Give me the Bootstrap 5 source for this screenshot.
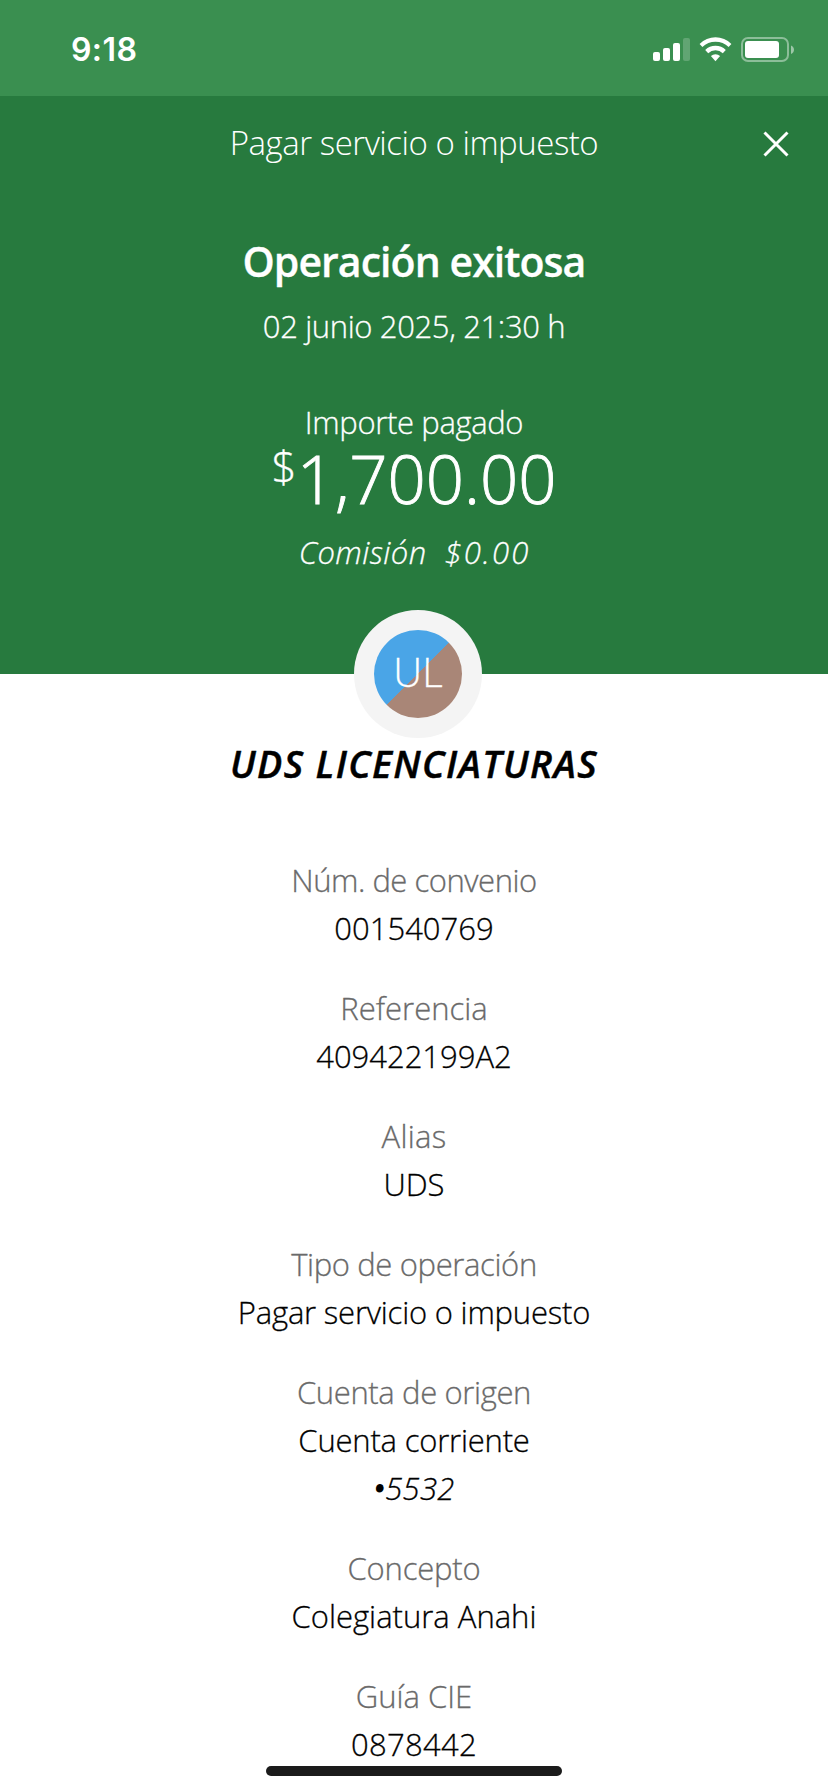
<!DOCTYPE html>
<html lang="es">
<head>
<meta charset="utf-8">
<meta name="viewport" content="width=device-width, initial-scale=1">
<title>Operación exitosa</title>
<link href="https://cdn.jsdelivr.net/npm/bootstrap@5.3.0/dist/css/bootstrap.min.css" rel="stylesheet">
<style>
  body { font-family: "Open Sans", sans-serif; font-size: 31px; line-height: 48px; font-weight: 300; color: #000; background: #fff; -webkit-text-stroke: .3px; }
  .screen { height: 1792px; }
  .status-bar { height: 96px; background: #3a8f50; padding: 0 34px 0 71px; }
  .clock { font: 600 32px/40px Inter, sans-serif; letter-spacing: .4px; margin-top: 30px; -webkit-text-stroke: 0; }
  .status-icons { margin-top: 34px; }
  .hero { height: 578px; background: #277a3e; padding-top: 23px; }
  .screen-title { font-size: 33px; letter-spacing: -.48px; -webkit-text-stroke: 0; }
  .close-btn { top: 36px; right: 40px; line-height: 0; }
  .headline { font-size: 41px; line-height: 56px; font-weight: 600; letter-spacing: -.95px; margin: 66px 0 13px; }
  .amount { font-size: 67px; line-height: 64px; margin-bottom: 18px; -webkit-text-stroke: .9px; }
  .currency { font-size: 44px; line-height: 40px; -webkit-text-stroke: .3px; }
  .fee { gap: 18px; padding-left: 1px; }
  .fee-label { letter-spacing: .42px; }
  .fee-value { letter-spacing: 2.1px; }
  .avatar-ring { width: 128px; height: 128px; background: #f4f4f4; margin: -64px 0 0 8px; }
  .avatar-disc { width: 88px; height: 88px; font-size: 40px; line-height: 84px; background: linear-gradient(135deg, #4aa5e7 50%, #a98677 50%); }
  .payee { font-size: 37.5px; line-height: 48px; font-weight: 600; letter-spacing: 1.4px; margin: 2px 0 68px; -webkit-text-stroke: .5px; }
  .details { gap: 32px; }
  .details dt { font-weight: 300; color: #6a6a6a; }
  .tight-1 { letter-spacing: -.2px; }
  .tight-2 { letter-spacing: -.36px; }
  .tight-3 { letter-spacing: -.47px; }
  .loose { letter-spacing: .3px; }
  .mask-dot { -webkit-text-stroke: 3px; }
  .home-bar { left: 266px; bottom: 16px; width: 296px; height: 10px; background: #1b1b1b; }
</style>
</head>
<body>
<div class="screen position-relative overflow-hidden">
  <header>
    <div class="status-bar d-flex justify-content-between align-items-start text-white">
      <div class="clock">9:18</div>
      <div class="status-icons d-flex">
        <svg width="142" height="32" viewBox="652 34 142 32" fill="#fff">
          <rect x="653" y="52" width="7" height="9" rx="2"/>
          <rect x="663" y="48" width="7" height="13" rx="2"/>
          <rect x="673" y="43" width="7" height="18" rx="2"/>
          <rect x="683" y="38" width="7" height="23" rx="2" opacity=".2"/>
          <path d="M699.6 43.9a22.6 22.6 0 0 1 31.8 0l-2.8 3.2a18.6 18.6 0 0 0-26.2 0z"/>
          <path d="M705.2 50a14.7 14.7 0 0 1 20.6 0l-3 3.2a10.3 10.3 0 0 0-14.6 0z"/>
          <path d="M710.9 56.1a6.8 6.8 0 0 1 9.2 0l-4.6 5.1z"/>
          <rect x="742" y="38" width="46" height="23" rx="6" fill="none" stroke="#fff" stroke-width="2" opacity=".42"/>
          <rect x="745" y="41" width="34" height="17" rx="3"/>
          <path d="M791 45.5c4 1.5 4 7 0 8.5z" opacity=".5"/>
        </svg>
      </div>
    </div>
    <div class="hero position-relative text-center text-white">
      <div class="screen-title">Pagar servicio o impuesto</div>
      <button type="button" class="close-btn btn p-0 border-0 position-absolute" aria-label="Cerrar">
        <svg width="24" height="24" viewBox="0 0 24 24" fill="none" stroke="#fff" stroke-width="3" overflow="visible"><path d="M.5.5l23 23M23.5.5l-23 23"/></svg>
      </button>
      <h1 class="headline">Operación exitosa</h1>
      <div class="tight-2 mb-5">02 junio 2025, 21:30 h</div>
      <div class="tight-2">Importe pagado</div>
      <div class="amount d-flex justify-content-center align-items-start"><span class="currency">$</span><span>1,700.00</span></div>
      <div class="fee d-flex justify-content-center fst-italic"><span class="fee-label">Comisión</span><span class="fee-value">$0.00</span></div>
    </div>
  </header>
  <main class="d-flex flex-column align-items-center text-center">
    <div class="avatar-ring rounded-circle position-relative d-flex align-items-center justify-content-center">
      <div class="avatar-disc rounded-circle text-white">UL</div>
    </div>
    <h2 class="payee fst-italic">UDS LICENCIATURAS</h2>
    <dl class="details d-flex flex-column m-0">
      <div><dt class="tight-3">Núm. de convenio</dt><dd class="m-0">001540769</dd></div>
      <div><dt>Referencia</dt><dd class="m-0">409422199A2</dd></div>
      <div><dt class="loose">Alias</dt><dd class="m-0">UDS</dd></div>
      <div><dt class="tight-2">Tipo de operación</dt><dd class="tight-1 m-0">Pagar servicio o impuesto</dd></div>
      <div><dt class="tight-2">Cuenta de origen</dt><dd class="tight-1 m-0">Cuenta corriente</dd><dd class="loose fst-italic m-0"><span class="mask-dot">•</span>5532</dd></div>
      <div><dt class="tight-1">Concepto</dt><dd class="m-0">Colegiatura Anahi</dd></div>
      <div><dt>Guía CIE</dt><dd class="loose m-0">0878442</dd></div>
    </dl>
  </main>
  <div class="home-bar position-absolute rounded-pill"></div>
</div>
<script src="https://cdn.jsdelivr.net/npm/bootstrap@5.3.0/dist/js/bootstrap.bundle.min.js"></script>
</body>
</html>
